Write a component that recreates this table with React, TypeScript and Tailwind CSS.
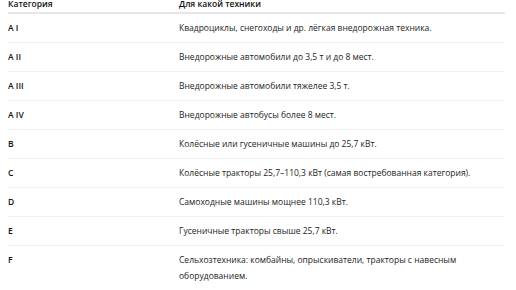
const rows: [string, string][] = [
  ["A I", "Квадроциклы, снегоходы и др. лёгкая внедорожная техника."],
  ["A II", "Внедорожные автомобили до 3,5 т и до 8 мест."],
  ["A III", "Внедорожные автомобили тяжелее 3,5 т."],
  ["A IV", "Внедорожные автобусы более 8 мест."],
  ["B", "Колёсные или гусеничные машины до 25,7 кВт."],
  ["C", "Колёсные тракторы 25,7–110,3 кВт (самая востребованная категория)."],
  ["D", "Самоходные машины мощнее 110,3 кВт."],
  ["E", "Гусеничные тракторы свыше 25,7 кВт."],
  ["F", "Сельхозтехника: комбайны, опрыскиватели, тракторы с навесным оборудованием."],
];

export default function App() {
  return (
    <div className="h-[290px] w-[516px] overflow-hidden bg-white font-['Open_Sans',sans-serif] text-[8.5px] text-[#242424]">
      <div className="-mt-[4px] ml-2 w-[497px]">
        {/* header */}
        <div className="flex border-b-2 border-[#e6e6e6] leading-4 font-semibold text-[#111]">
          <div className="w-[171px] shrink-0">Категория</div>
          <div className="flex-1">Для какой техники</div>
        </div>
        {rows.map(([cat, desc], i) => (
          <div
            key={cat}
            className={`flex py-[6px] leading-4 ${i < rows.length - 1 ? "border-b border-[#f0f0f0]" : ""}`}
          >
            <div className="w-[171px] shrink-0 font-semibold text-[#111]">{cat}</div>
            <div className="flex-1 pr-6">{desc}</div>
          </div>
        ))}
      </div>
    </div>
  );
}
